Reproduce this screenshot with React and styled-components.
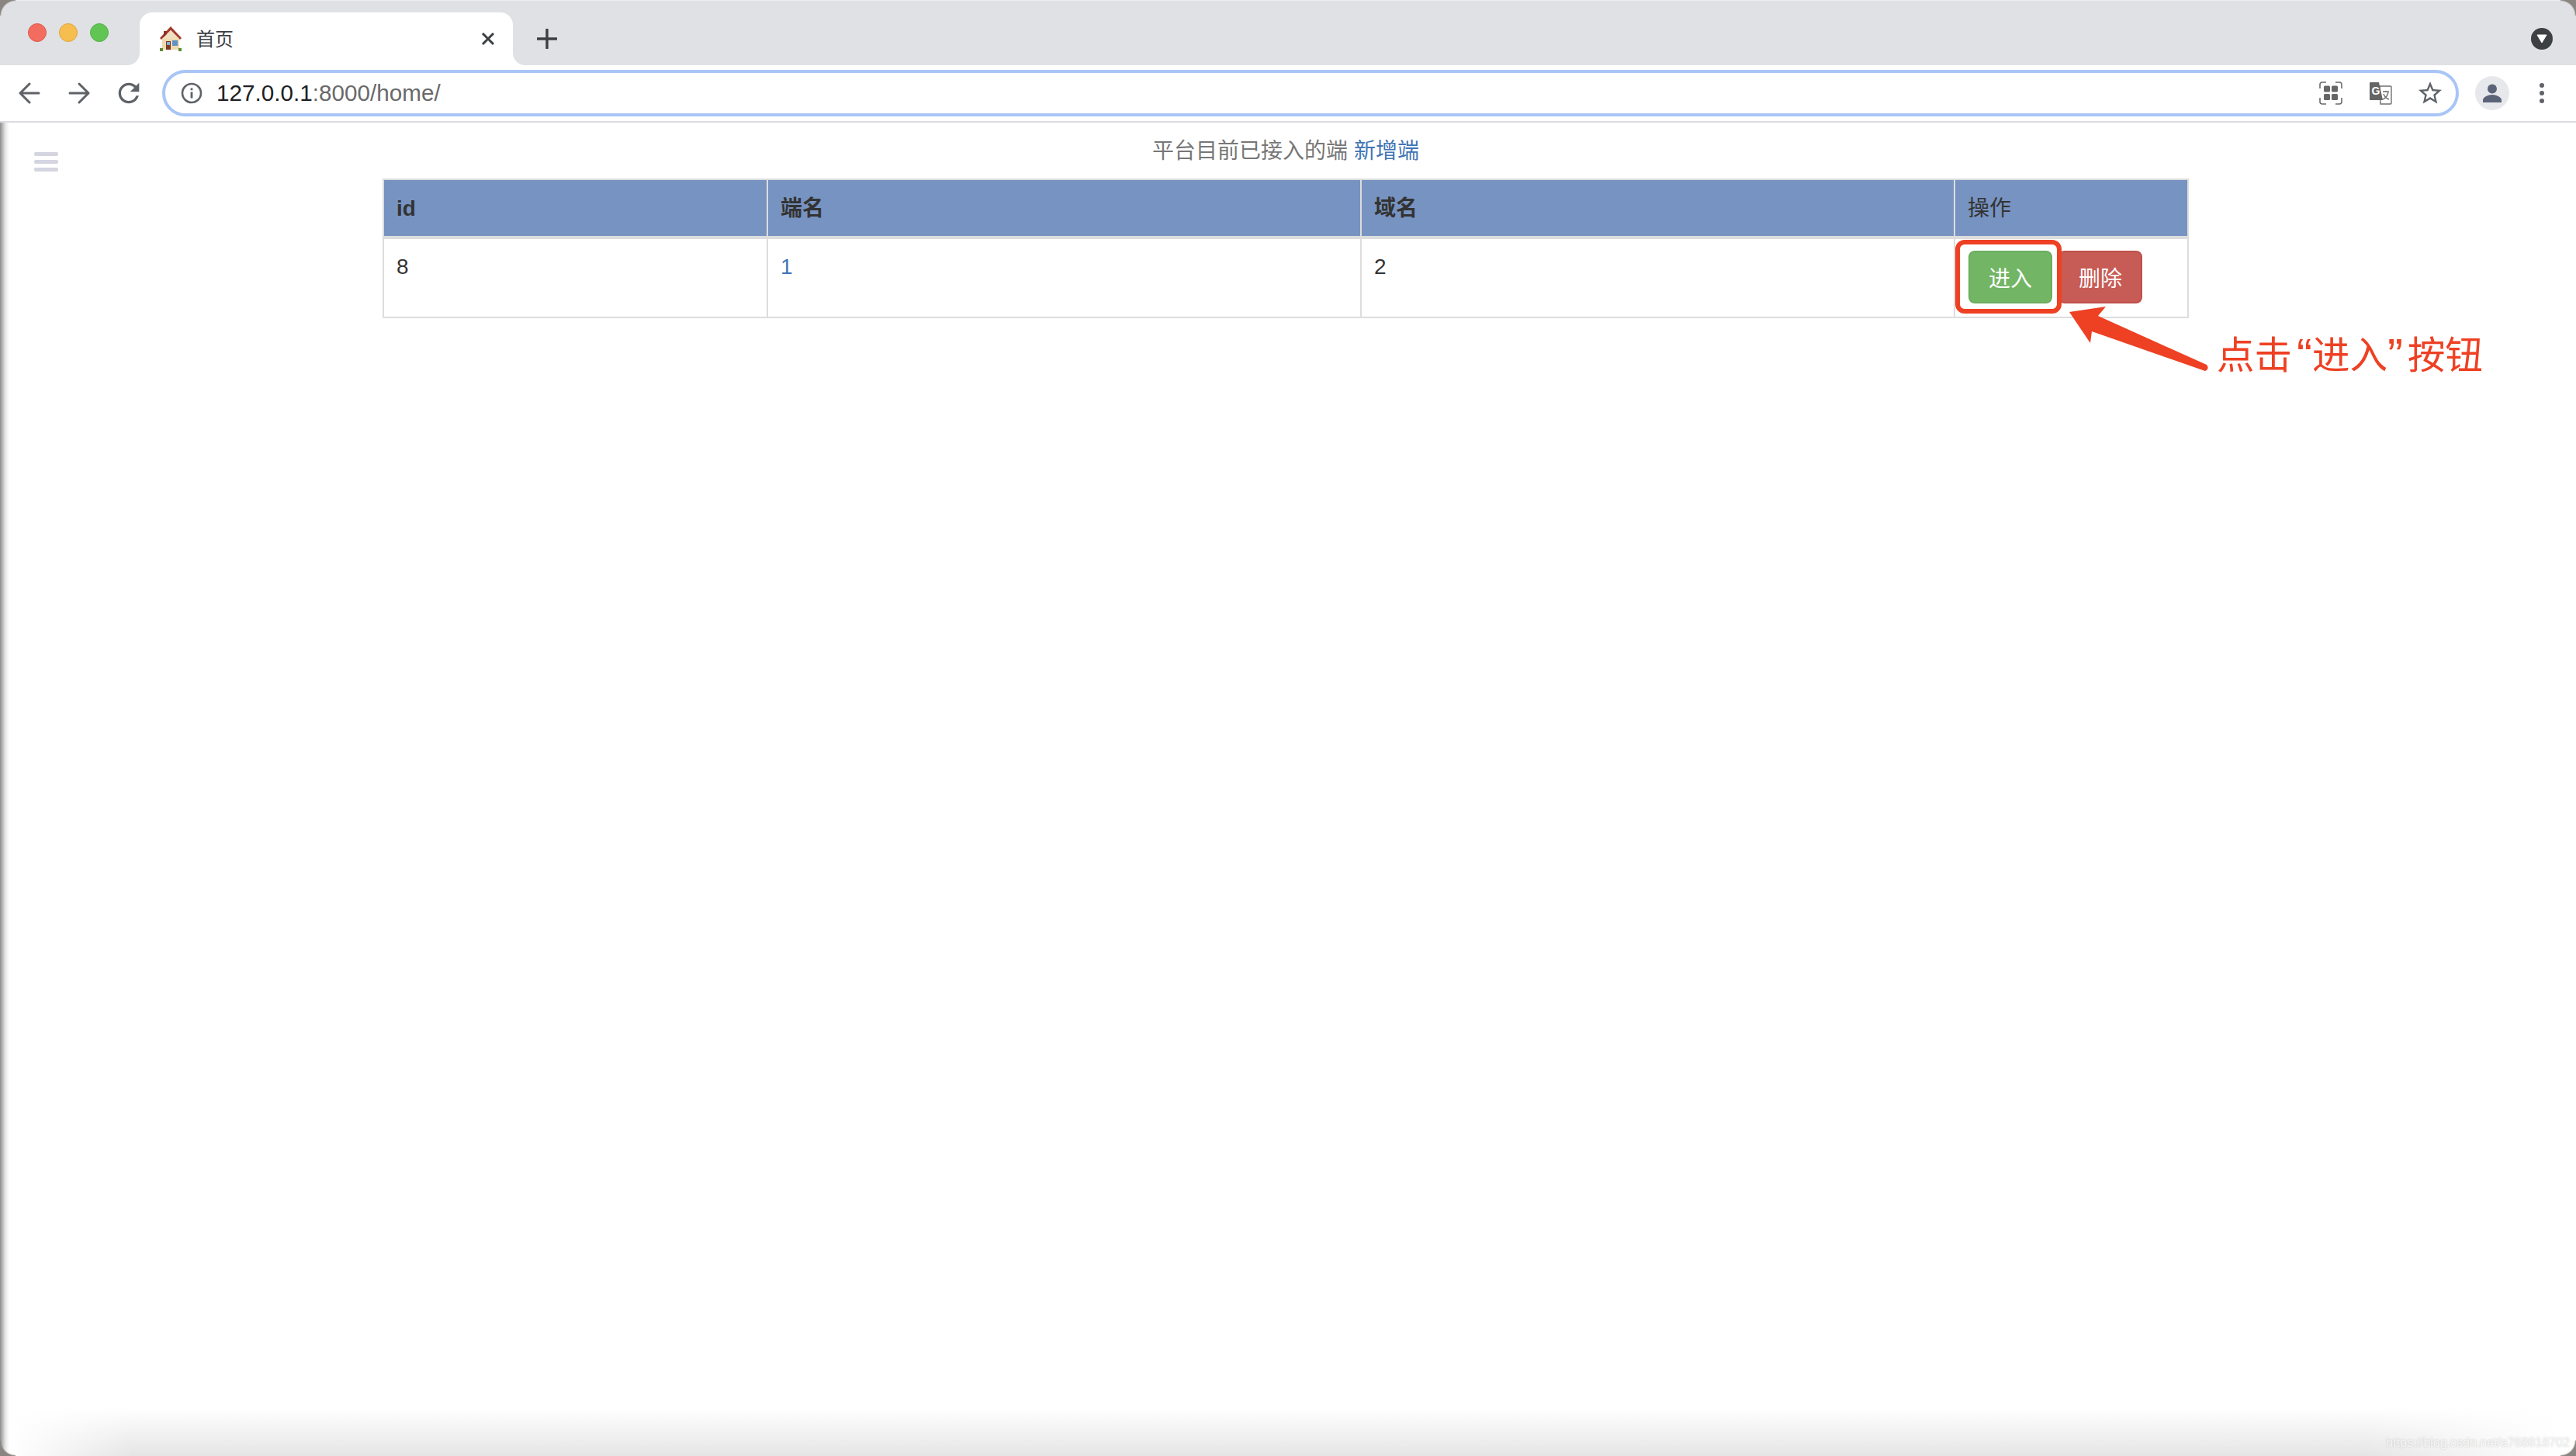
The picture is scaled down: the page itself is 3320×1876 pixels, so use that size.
import React from 'react';
import styled, { createGlobalStyle } from 'styled-components';

const GlobalStyle = createGlobalStyle`
  html, body {
    margin: 0;
    padding: 0;
    background: #fff;
  }
  body {
    font-family: "Liberation Sans", "Noto Sans CJK SC", sans-serif;
    color: #333;
  }
`

const Window = styled.div`
  position: relative;
  display: flex;
  flex-direction: column;
  width: 3320px;
  height: 1876px;
  overflow: hidden;
  background: #fff;
`
const TabStrip = styled.div`
  display: flex;
  align-items: flex-end;
  height: 84px;
  flex-shrink: 0;
  background: #dfe1e5;
  box-sizing: border-box;
  border-top: 1px solid #ecedef;
`
const TrafficLights = styled.div`
  display: flex;
  align-items: center;
  gap: 16px;
  width: 144px;
  height: 83px;
  padding: 0 0 0 36px;
  margin-top: 0;
  box-sizing: content-box;
  transform: translateY(-1px);
`
const Light = styled.span`
  width: 24px;
  height: 24px;
  border-radius: 50%;
  box-sizing: border-box;
  background: ${(p) => p.$color};
  border: 1px solid ${(p) => p.$edge};
`
const Tab = styled.div`
  position: relative;
  display: flex;
  align-items: center;
  width: 481px;
  height: 68px;
  box-sizing: border-box;
  padding: 0 23px 0 24px;
  background: #fff;
  border-radius: 16px 16px 0 0;
  &::before, &::after {
    content: '';
    position: absolute;
    bottom: 0;
    width: 16px;
    height: 16px;
  }
  &::before {
    left: -16px;
    background: radial-gradient(circle at 0 0, #dfe1e5 15.5px, #fff 16.5px);
  }
  &::after {
    right: -16px;
    background: radial-gradient(circle at 100% 0, #dfe1e5 15.5px, #fff 16.5px);
  }
`
const TabTitle = styled.span`
  margin: 0 0 3px 17px;
  font-size: 24px;
  color: #3c4043;
  flex: 1;
`
const NewTab = styled.div`
  display: flex;
  align-items: center;
  justify-content: center;
  width: 48px;
  height: 68px;
  margin-left: 20px;
`
const StripEnd = styled.div`
  display: flex;
  align-items: center;
  justify-content: flex-end;
  flex: 1;
  height: 68px;
  padding-right: 30px;
`
const DropCircle = styled.div`
  display: flex;
  align-items: center;
  justify-content: center;
  width: 28px;
  height: 28px;
  border-radius: 50%;
  background: #3c4043;
`
const Toolbar = styled.div`
  display: flex;
  align-items: center;
  height: 74px;
  flex-shrink: 0;
  box-sizing: border-box;
  background: #fff;
  border-bottom: 2px solid #dcdce3;
`
const NavGroup = styled.div`
  display: flex;
  align-items: center;
  gap: 24px;
  padding-left: 18px;
  width: 209px;
  box-sizing: border-box;
`
const NavButton = styled.div`
  display: flex;
  align-items: center;
  justify-content: center;
  width: 40px;
  height: 40px;
`
const Omnibox = styled.div`
  display: flex;
  align-items: center;
  width: 2960px;
  height: 60px;
  box-sizing: border-box;
  padding: 0 14px 0 20px;
  border: 4px solid #a8c5f7;
  border-radius: 30px;
`
const UrlText = styled.div`
  flex: 1;
  margin-left: 18px;
  font-size: 29.7px;
  color: #6a6a6a;
  white-space: nowrap;
`
const UrlHost = styled.span`
  color: #202124;
`
const OmniIcons = styled.div`
  display: flex;
  align-items: center;
  gap: 26px;
`
const OmniIcon = styled.div`
  display: flex;
  align-items: center;
  justify-content: center;
  width: 38px;
  height: 38px;
`
const Avatar = styled.div`
  display: flex;
  align-items: center;
  justify-content: center;
  width: 44px;
  height: 44px;
  margin-left: 21px;
  border-radius: 50%;
  background: #e7e8eb;
`
const MenuDots = styled.div`
  display: flex;
  flex-direction: column;
  align-items: center;
  gap: 4px;
  margin-left: 39px;
`
const Dot = styled.span`
  width: 6px;
  height: 6px;
  border-radius: 50%;
  background: #5f6368;
`
const Page = styled.div`
  position: relative;
  display: flex;
  flex: 1;
  background: linear-gradient(to right, #8d8d8d 0, #b5b5b5 3px, #e8e8e8 7px, #fff 12px);
`
const SideColumn = styled.div`
  width: 493px;
  flex-shrink: 0;
  box-sizing: border-box;
  padding: 38px 0 0 44px;
`
const Hamburger = styled.div`
  display: flex;
  flex-direction: column;
  gap: 5px;
  width: 31px;
`
const HamburgerBar = styled.span`
  height: 5px;
  border-radius: 2px;
  background: #d5d5e2;
`
const Main = styled.div`
  position: relative;
  width: 2328px;
`
const Heading = styled.div`
  height: 40px;
  margin-top: 17px;
  margin-bottom: 15px;
  text-align: center;
  font-size: 28px;
  line-height: 40px;
  color: #777;
`
const Link = styled.a`
  color: #3f75b5;
  text-decoration: none;
`
const TableWrap = styled.div`
  position: relative;
`
const Table = styled.table`
  width: 2326px;
  table-layout: fixed;
  border-collapse: collapse;
  font-size: 28px;
  line-height: 40px;
  color: #333;
`
const Th = styled.th`
  padding: 17px 16px 15px;
  text-align: left;
  font-weight: ${(p) => (p.$light ? 400 : 700)};
  background: #7793c1;
  border: 2px solid #ddd;
  border-bottom-width: 4px;
`
const Td = styled.td`
  padding: 16px;
  vertical-align: top;
  border: 2px solid #ddd;
`
const Button = styled.button`
  width: ${(p) => p.$width}px;
  height: 68px;
  margin: 0 7px 0 1px;
  padding: 0;
  font-family: inherit;
  font-size: 28px;
  color: #fff;
  border-radius: 8px;
  background: ${(p) => p.$bg};
  border: 2px solid ${(p) => p.$edge};
  transform: translateY(-1px);
`
const HighlightBox = styled.div`
  position: absolute;
  left: 2027px;
  top: 79px;
  width: 137px;
  height: 95px;
  box-sizing: border-box;
  border: 6px solid #ee4023;
  border-radius: 12px;
`
const ArrowMark = styled.svg`
  position: absolute;
  left: 2167px;
  top: 160px;
`
const Callout = styled.div`
  display: flex;
  position: absolute;
  left: 2364px;
  top: 195px;
  font-size: 48.5px;
  line-height: 66px;
  color: #ee4023;
  white-space: nowrap;
`
const QuoteMark = styled.span`
  width: 26px;
  font-family: "Liberation Sans", sans-serif;
  font-size: 60px;
  text-align: ${(p) => (p.$open ? 'right' : 'left')};
`
const BottomFade = styled.div`
  position: absolute;
  left: 0;
  right: 0;
  bottom: 0;
  height: 62px;
  background: linear-gradient(to bottom, rgba(225, 225, 225, 0), #e5e5e5);
  mask-image: linear-gradient(to right, transparent 12px, #000 170px, #000 3050px, transparent 3300px);
  pointer-events: none;
`
const Watermark = styled.div`
  position: absolute;
  right: 8px;
  bottom: 8px;
  font-size: 16px;
  line-height: 18px;
  color: rgba(255, 255, 255, 0.85);
  text-shadow: 0 0 2px rgba(150, 150, 150, 0.6);
  white-space: nowrap;
`
const Corner = styled.div`
  position: absolute;
  width: 20px;
  height: 20px;
  ${(p) => (p.$top ? 'top: 0;' : 'bottom: 0;')}
  ${(p) => (p.$left ? 'left: 0;' : 'right: 0;')}
  background: radial-gradient(
    circle at ${(p) => (p.$left ? '100%' : '0')} ${(p) => (p.$top ? '100%' : '0')},
    transparent 18px,
    #8a8580 20px
  );
`

function Favicon() {
  return (
    <svg width="32" height="34" viewBox="0 0 32 34">
      <path d="M5 15h22v16H5z" fill="#eed9ae" />
      <path d="M16 1 30 16l-2 2L16 6 4 18l-2-2z" fill="#a33b2c" />
      <path d="M7 7h4v5l-4 4z" fill="#8c3326" />
      <path d="M16 6 27 17H5z" fill="#f0dfc0" />
      <path d="M10 20h6v11h-6z" fill="#7d3a25" />
      <path d="M11 21h4v4h-4z" fill="#7fb2d8" />
      <path d="M18 19h7v7h-7z" fill="#5f93c4" />
      <path d="M2 29h4v4H2zM26 29h4v4h-4z" fill="#5d8c35" />
    </svg>
  );
}

function TabClose() {
  return (
    <svg width="18" height="18" viewBox="0 0 18 18">
      <path d="M2 2l14 14M16 2 2 16" stroke="#3c4043" strokeWidth="3" fill="none" />
    </svg>
  );
}

function PlusIcon() {
  return (
    <svg width="26" height="26" viewBox="0 0 26 26">
      <path d="M13 1v24M1 13h24" stroke="#3c4043" strokeWidth="3.4" strokeLinecap="round" fill="none" />
    </svg>
  );
}

function BackIcon() {
  return (
    <svg width="28" height="28" viewBox="0 0 28 28">
      <path d="M26 14H3M14 2 2 14l12 12" stroke="#5f6368" strokeWidth="3" strokeLinecap="round" strokeLinejoin="round" fill="none" />
    </svg>
  );
}

function ForwardIcon() {
  return (
    <svg width="28" height="28" viewBox="0 0 28 28">
      <path d="M2 14h23M14 2l12 12-12 12" stroke="#5f6368" strokeWidth="3" strokeLinecap="round" strokeLinejoin="round" fill="none" />
    </svg>
  );
}

function ReloadIcon() {
  return (
    <svg width="40" height="40" viewBox="0 0 24 24">
      <path fill="#5f6368" d="M17.65 6.35A7.958 7.958 0 0 0 12 4c-4.42 0-7.99 3.58-7.99 8s3.57 8 7.99 8c3.73 0 6.84-2.55 7.73-6h-2.08A5.99 5.99 0 0 1 12 18c-3.31 0-6-2.69-6-6s2.69-6 6-6c1.66 0 3.14.69 4.22 1.78L13 11h7V4l-2.35 2.35z" />
    </svg>
  );
}

function InfoIcon() {
  return (
    <svg width="28" height="28" viewBox="0 0 28 28">
      <circle cx="14" cy="14" r="12" stroke="#5f6368" strokeWidth="2.6" fill="none" />
      <path d="M12.6 12.5h2.8v8h-2.8zM12.6 7.5h2.8v2.8h-2.8z" fill="#5f6368" />
    </svg>
  );
}

function QrIcon() {
  return (
    <svg width="30" height="30" viewBox="0 0 30 30">
      <path d="M1 9V4a3 3 0 0 1 3-3h5M21 1h5a3 3 0 0 1 3 3v5M29 21v5a3 3 0 0 1-3 3h-5M9 29H4a3 3 0 0 1-3-3v-5" stroke="#6b6b6b" strokeWidth="1.6" fill="none" />
      <rect x="6" y="5.5" width="8" height="8" rx="1.5" fill="#666" />
      <rect x="16" y="5.5" width="8" height="8" rx="1.5" fill="#666" />
      <rect x="6" y="16" width="8" height="8" rx="1.5" fill="#666" />
      <rect x="16" y="16" width="8" height="8" rx="1.5" fill="#666" />
    </svg>
  );
}

function TranslateIcon() {
  return (
    <svg width="30" height="30" viewBox="0 0 30 30">
      <path d="M14 6h14a1 1 0 0 1 1 1v21a1 1 0 0 1-1 1H15z" fill="#fff" stroke="#707070" strokeWidth="1.4" />
      <path d="M2 1h11l5 23H2a1 1 0 0 1-1-1V2a1 1 0 0 1 1-1z" fill="#656565" />
      <text x="3.5" y="17" fontFamily="Liberation Sans" fontWeight="700" fontSize="14" fill="#fff">G</text>
      <path d="M18 13h8M22 12v2M25 14c-1 4-4 8-7 9M19 16c1 3 4 6 7 7" stroke="#707070" strokeWidth="1.4" fill="none" />
    </svg>
  );
}

function StarIcon() {
  return (
    <svg width="36" height="36" viewBox="0 0 24 24">
      <path fill="#5f6368" d="M22 9.24l-7.19-.62L12 2 9.19 8.63 2 9.24l5.46 4.73L5.82 21 12 17.27 18.18 21l-1.63-7.03L22 9.24zM12 15.4l-3.76 2.27 1-4.28-3.32-2.88 4.38-.38L12 6.1l1.71 4.04 4.38.38-3.32 2.88 1 4.28L12 15.4z" />
    </svg>
  );
}

function PersonIcon() {
  return (
    <svg width="26" height="26" viewBox="0 0 26 26">
      <circle cx="13" cy="7.5" r="6" fill="#5a6378" />
      <path d="M1 25v-3c0-4 7-7 12-7s12 3 12 7v3z" fill="#5a6378" />
    </svg>
  );
}

function App() {
  return (
    <Window>
      <GlobalStyle />
      <TabStrip>
        <TrafficLights>
          <Light $color="#f26d5f" $edge="#e0584b" />
          <Light $color="#f6bd4f" $edge="#e2a53b" />
          <Light $color="#61c554" $edge="#54b047" />
        </TrafficLights>
        <Tab>
          <Favicon />
          <TabTitle>首页</TabTitle>
          <TabClose />
        </Tab>
        <NewTab>
          <PlusIcon />
        </NewTab>
        <StripEnd>
          <DropCircle>
            <svg width="14" height="12" viewBox="0 0 14 12">
              <path d="M1 1h12L7 11z" fill="#fff" stroke="#fff" strokeLinejoin="round" />
            </svg>
          </DropCircle>
        </StripEnd>
      </TabStrip>
      <Toolbar>
        <NavGroup>
          <NavButton><BackIcon /></NavButton>
          <NavButton><ForwardIcon /></NavButton>
          <NavButton><ReloadIcon /></NavButton>
        </NavGroup>
        <Omnibox>
          <InfoIcon />
          <UrlText><UrlHost>127.0.0.1</UrlHost>:8000/home/</UrlText>
          <OmniIcons>
            <OmniIcon><QrIcon /></OmniIcon>
            <OmniIcon><TranslateIcon /></OmniIcon>
            <OmniIcon><StarIcon /></OmniIcon>
          </OmniIcons>
        </Omnibox>
        <Avatar><PersonIcon /></Avatar>
        <MenuDots><Dot /><Dot /><Dot /></MenuDots>
      </Toolbar>
      <Page>
        <SideColumn>
          <Hamburger>
            <HamburgerBar />
            <HamburgerBar />
            <HamburgerBar />
          </Hamburger>
        </SideColumn>
        <Main>
          <Heading>平台目前已接入的端 <Link>新增端</Link></Heading>
          <TableWrap>
            <Table>
              <colgroup>
                <col style={{ width: 495 }} />
                <col style={{ width: 765 }} />
                <col style={{ width: 765 }} />
                <col style={{ width: 301 }} />
              </colgroup>
              <thead>
                <tr>
                  <Th>id</Th>
                  <Th>端名</Th>
                  <Th>域名</Th>
                  <Th $light>操作</Th>
                </tr>
              </thead>
              <tbody>
                <tr>
                  <Td>8</Td>
                  <Td><Link>1</Link></Td>
                  <Td>2</Td>
                  <Td>
                    <Button $width={108} $bg="#72b565" $edge="#6bae5e">进入</Button>
                    <Button $width={108} $bg="#c75b55" $edge="#bf504a">删除</Button>
                  </Td>
                </tr>
              </tbody>
            </Table>
            <HighlightBox />
            <ArrowMark width="200" height="100" viewBox="0 0 200 100">
              <path d="M7 12 54 5 44 17 184 80q4 5-2 8L36 37 34 52z" fill="#ee4023" />
            </ArrowMark>
            <Callout>点击<QuoteMark $open>“</QuoteMark>进入<QuoteMark>”</QuoteMark>按钮</Callout>
          </TableWrap>
        </Main>
        <BottomFade />
        <Watermark>https://blog.csdn.net/a768818702</Watermark>
      </Page>
      <Corner $top $left />
      <Corner $top />
      <Corner $left />
      <Corner />
    </Window>
  );
}

export default App;
